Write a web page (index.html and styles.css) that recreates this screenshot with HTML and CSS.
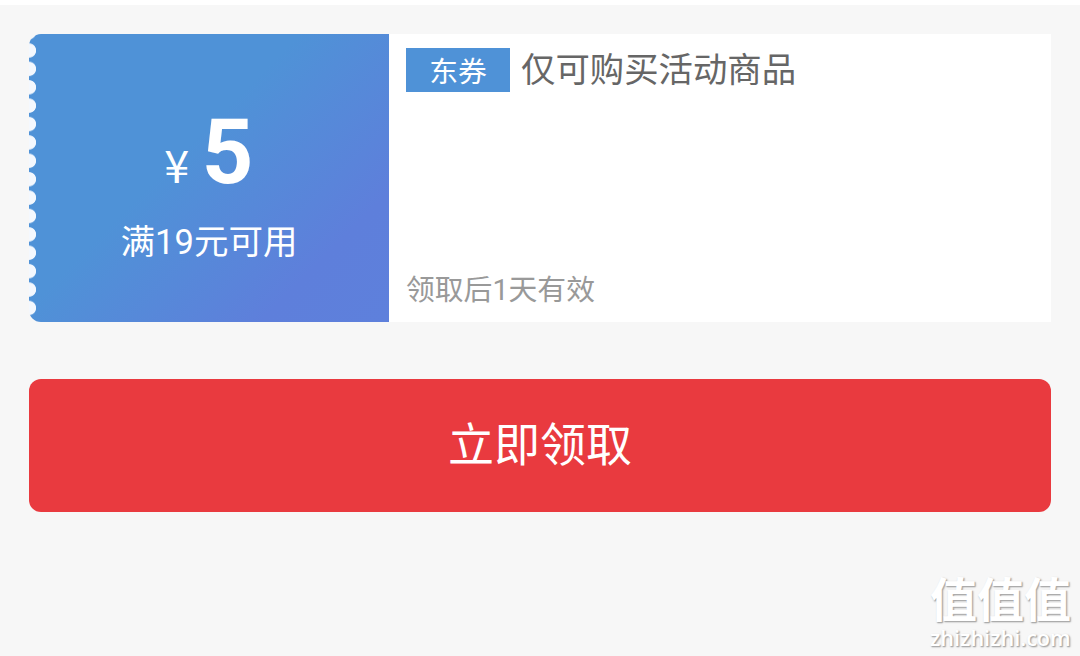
FILE: index.html
```html
<!DOCTYPE html>
<html lang="zh-CN">
<head>
<meta charset="utf-8">
<title>优惠券</title>
<link rel="stylesheet" href="styles.css">
</head>
<body>
<main class="page">
  <section class="coupon">
    <div class="coupon-value">
      <div class="amount"><span class="currency">¥</span><span class="number">5</span></div>
      <div class="condition">满19元可用</div>
    </div>
    <div class="coupon-info">
      <div class="heading"><span class="tag">东券</span><span class="title">仅可购买活动商品</span></div>
      <div class="validity">领取后1天有效</div>
    </div>
  </section>
  <button class="claim" type="button">立即领取</button>
</main>
<div class="watermark">
  <div class="watermark-name">值值值</div>
  <div class="watermark-site">zhizhizhi.com</div>
</div>
</body>
</html>
```
FILE: styles.css
```css
* { box-sizing: border-box; }

body {
  margin: 0;
  height: 656px;
  overflow: hidden;
  background: #f7f7f7;
  border-top: 5px solid #fff;
  font-family: "Noto Sans CJK SC", sans-serif;
}

.page { padding: 29px 29px 0; }

.coupon {
  display: flex;
  height: 288px;
}

.coupon-value {
  width: 360px;
  padding-top: 77px;
  border-radius: 12px 0 0 12px;
  background:
    radial-gradient(circle at 0 50%, #f4f8fe 6.7px, transparent 7.5px) 0 7.3px / 8px 18.4px repeat-y,
    linear-gradient(135deg, #4f92d7 0%, #4f92d7 42%, #5e7fdb 80%, #5e80dc 100%);
  color: #fff;
  text-align: center;
}

.amount {
  display: flex;
  justify-content: center;
  align-items: baseline;
  gap: 9px;
  height: 84px;
  padding-right: 4px;
  line-height: 84px;
}

.currency {
  width: 32px;
  font-size: 45px;
}

.number {
  font: 700 90px/84px Roboto, sans-serif;
}

.condition {
  margin-top: 21px;
  font-family: Roboto, "Noto Sans CJK SC", sans-serif;
  font-size: 34.5px;
  line-height: 52px;
}

.coupon-info {
  flex: 1;
  display: flex;
  flex-direction: column;
  justify-content: space-between;
  padding: 14px 17px 11px;
  background: #fff;
}

.heading {
  display: flex;
  align-items: flex-start;
  gap: 11px;
  height: 44px;
}

.tag {
  width: 104px;
  height: 44px;
  background: #4f92d7;
  color: #fff;
  font-size: 28.8px;
  line-height: 44px;
  text-align: center;
}

.title {
  color: #666;
  font-size: 34.4px;
  line-height: 39px;
}

.validity {
  color: #999;
  font-family: Roboto, "Noto Sans CJK SC", sans-serif;
  font-size: 28.8px;
  line-height: 42px;
}

.claim {
  display: block;
  width: 100%;
  height: 133px;
  margin-top: 57px;
  padding: 0 0 9px;
  border: 0;
  border-radius: 12px;
  background: #e93a3f;
  color: #fff;
  font: 400 46px/124px "Noto Sans CJK SC", sans-serif;
}

.watermark {
  position: absolute;
  right: 8px;
  bottom: 6px;
  width: 142px;
  color: #fff;
  text-shadow: 1px 1px 2px #aaa, 1px 1px 1px #aaa;
}

.watermark-name {
  margin-bottom: 4px;
  font-size: 47px;
  font-weight: 700;
  line-height: 50px;
  white-space: nowrap;
}

.watermark-site {
  font: 600 21.6px/24px "Open Sans", sans-serif;
}
```
